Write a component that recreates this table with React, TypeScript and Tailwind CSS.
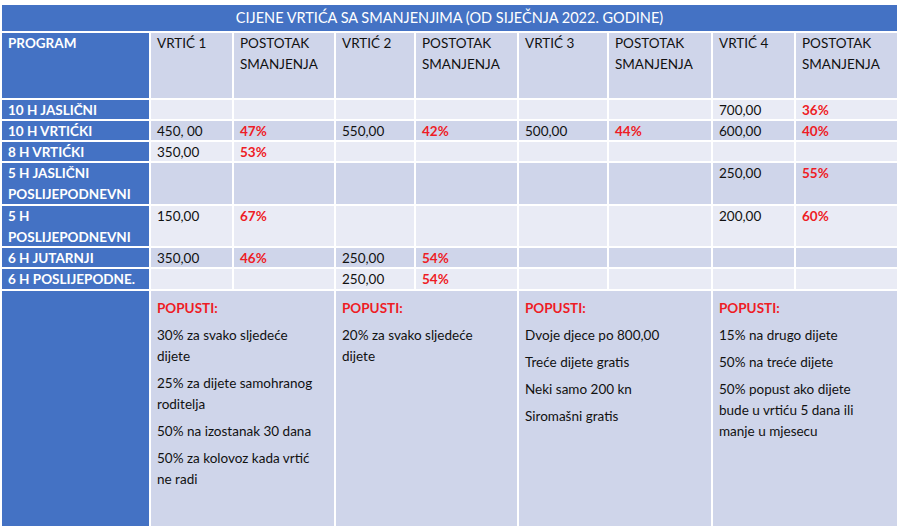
const rows: { label: string[]; h: string; band: 'dark' | 'light'; cells: (string | null)[] }[] = [
  { label: ['10 H JASLIČNI'], h: 'h-[19px]', band: 'light', cells: [null, null, null, null, null, null, '700,00', '36%'] },
  { label: ['10 H VRTIĆKI'], h: 'h-[19px]', band: 'dark', cells: ['450, 00', '47%', '550,00', '42%', '500,00', '44%', '600,00', '40%'] },
  { label: ['8 H VRTIĆKI'], h: 'h-[19px]', band: 'light', cells: ['350,00', '53%', null, null, null, null, null, null] },
  { label: ['5 H JASLIČNI', 'POSLIJEPODNEVNI'], h: 'h-[41px]', band: 'dark', cells: [null, null, null, null, null, null, '250,00', '55%'] },
  { label: ['5 H', 'POSLIJEPODNEVNI'], h: 'h-[40px]', band: 'light', cells: ['150,00', '67%', null, null, null, null, '200,00', '60%'] },
  { label: ['6 H JUTARNJI'], h: 'h-[19px]', band: 'dark', cells: ['350,00', '46%', '250,00', '54%', null, null, null, null] },
  { label: ['6 H POSLIJEPODNE.'], h: 'h-[20px]', band: 'light', cells: [null, null, '250,00', '54%', null, null, null, null] },
];

const discounts: string[][] = [
  ['30% za svako sljedeće dijete', '25% za dijete samohranog roditelja', '50% na izostanak 30 dana', '50% za kolovoz kada vrtić ne radi'],
  ['20% za svako sljedeće dijete'],
  ['Dvoje djece po 800,00', 'Treće dijete gratis', 'Neki samo 200 kn', 'Siromašni gratis'],
  ['15% na drugo dijete', '50% na treće dijete', '50% popust ako dijete bude u vrtiću 5 dana ili manje u mjesecu'],
];

const widths = ['w-[81px]', 'w-[100px]', 'w-[78px]', 'w-[101px]', 'w-[88px]', 'w-[102px]', 'w-[81px]', 'w-[101px]'];
const discountWidths = ['w-[183px]', 'w-[181px]', 'w-[192px]', 'w-[184px]'];

function bandClass(band: 'dark' | 'light') {
  return band === 'dark' ? 'bg-[#cfd5ea]' : 'bg-[#e9ebf5]';
}

export default function App() {
  return (
    <div className="w-[900px] h-[528px] bg-white pt-[5px] pl-[2px] font-['Lato','Open_Sans',sans-serif] text-[13.5px] leading-[21px] text-[#111]">
      <div className="flex flex-col gap-[2px] w-[895px]">
        {/* title */}
        <div className="h-[26px] bg-[#4472c4] text-white text-[14.5px] flex items-center justify-center leading-none">
          CIJENE VRTIĆA SA SMANJENJIMA (OD SIJEČNJA 2022. GODINE)
        </div>

        {/* header */}
        <div className="flex gap-[2px] h-[65px]">
          <div className="w-[147px] bg-[#4472c4] text-white font-bold px-[6px]">PROGRAM</div>
          {['VRTIĆ 1', 'POSTOTAK', 'VRTIĆ 2', 'POSTOTAK', 'VRTIĆ 3', 'POSTOTAK', 'VRTIĆ 4', 'POSTOTAK'].map((t, i) => (
            <div key={i} className={`${widths[i]} bg-[#cfd5ea] px-[6px]`}>
              <div>{t}</div>
              {t === 'POSTOTAK' && <div>SMANJENJA</div>}
            </div>
          ))}
        </div>

        {rows.map((r, ri) => (
          <div key={ri} className={`flex gap-[2px] ${r.h}`}>
            <div className="w-[147px] bg-[#4472c4] text-white font-bold px-[6px] whitespace-nowrap">
              {r.label.map((l) => (
                <div key={l}>{l}</div>
              ))}
            </div>
            {r.cells.map((c, ci) => (
              <div
                key={ci}
                className={`${widths[ci]} ${bandClass(r.band)} px-[6px] whitespace-nowrap ${ci % 2 === 1 ? 'text-[#ee1c25] font-bold' : ''}`}
              >
                {c}
              </div>
            ))}
          </div>
        ))}

        {/* discounts */}
        <div className="flex gap-[2px] h-[235px]">
          <div className="w-[147px] bg-[#4472c4]" />
          {discounts.map((d, i) => (
            <div key={i} className={`${discountWidths[i]} bg-[#cfd5ea] px-[6px] pt-[1px]`}>
              <p className="mt-[6px] text-[#ee1c25] font-bold">POPUSTI:</p>
              {d.map((t) => (
                <p key={t} className="mt-[6px] pr-[10px]">{t}</p>
              ))}
            </div>
          ))}
        </div>
      </div>
    </div>
  );
}
